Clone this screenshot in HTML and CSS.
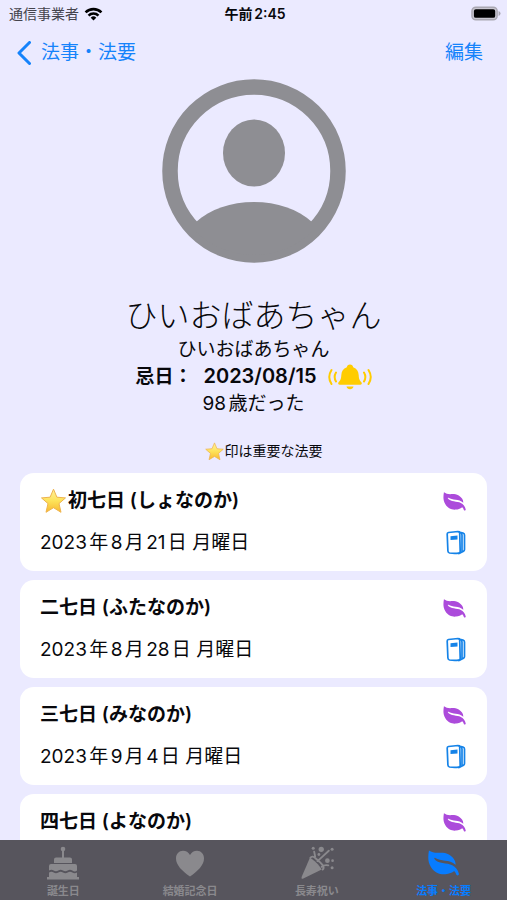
FILE: index.html
```html
<!DOCTYPE html>
<html lang="ja">
<head>
<meta charset="utf-8">
<meta name="viewport" content="width=device-width, initial-scale=1">
<title>法事・法要</title>
<link rel="stylesheet" href="styles.css">
</head>
<body>
<svg class="defs" aria-hidden="true">
  <defs>
    <linearGradient id="gold" x1="0" y1="0" x2="0" y2="1">
      <stop offset="0" stop-color="#fff0a0"/>
      <stop offset="0.5" stop-color="#fde35a"/>
      <stop offset="1" stop-color="#f8b830"/>
    </linearGradient>
    <symbol id="leaf" viewBox="0 0 32 27">
      <path fill="currentColor" d="M1 .5C0 6-.5 12 3 17.500 7 24 13 25.500 18 25c4-.2 7-1.500 9-3.200 1.300 1.200 1.800 2.500 2.300 3.800.7 1.400 3 .7 2.600-1.100C31 20.500 28.500 17.500 25 15.700 20 13 10 14.500 6.500 9c-.2-.7.4-1 1-.7C13 12 22 9.500 28.500 15.300 28.700 11 26 7.500 22 5 16 1.500 10 4 5 2.500 3.500 2 2.500 1.300 1 .5Z"/>
    </symbol>
    <symbol id="book" viewBox="0 0 20 26">
      <g fill="none" stroke="currentColor" stroke-width="1.700" stroke-linejoin="round" stroke-linecap="round">
        <path d="M2.500 2.500 12 1.500q1.500 0 1.700 1.500l.5 18.500q0 1.500-1.500 1.700-4.500.6-9.200-.2Q2 22.700 1.900 21L1.200 4Q1.200 2.700 2.500 2.500Z"/>
        <path d="M13 1.700 15 3q1 .8 1 2v17l-3 1.500M15 2.500l2 .5q1.500.5 1.500 2v14.500q0 1.200-1 1.700L16 22"/>
      </g>
      <path fill="currentColor" d="m4.500 6.200 7-.6v4l-7 .5Z"/>
    </symbol>
    <symbol id="star" viewBox="0 0 26 26">
      <path fill="url(#gold)" stroke="#eeb34d" stroke-width="1" stroke-linejoin="round" d="m13 1.200 3.400 8 8.600.7-6.500 5.700 2 8.700-7.500-4.600-7.500 4.600 2-8.700L1 9.900l8.600-.7Z"/>
    </symbol>
  </defs>
</svg>
<div class="app">
  <header>
    <div class="status">
      <div class="carrier">
        <span>通信事業者</span>
        <svg class="wifi" viewBox="0 0 20 15" aria-hidden="true"><g fill="none" stroke="#000" stroke-width="2.800"><path d="M1.500 5.700a12.200 12.200 0 0 1 17 0"/><path d="M4.700 9.200a7.500 7.500 0 0 1 10.600 0"/></g><path d="m10 14.500-3-3.100a4.300 4.300 0 0 1 6 0Z"/></svg>
      </div>
      <time class="clock">午前2:45</time>
      <svg class="battery" viewBox="0 0 31 15" aria-hidden="true"><rect x="1" y="1" width="26" height="13" rx="4" fill="#c9c7d1" stroke="#aaa8b2" stroke-width="1.500"/><rect x="3" y="3" width="22" height="9" rx="2"/><path fill="#aaa8b2" d="M28.500 5q2 .8 2 2.500t-2 2.500Z"/></svg>
    </div>
    <nav class="nav">
      <a class="back" href="#"><svg viewBox="0 0 14 24" aria-hidden="true"><path d="M12.500 1.500 2 12l10.500 10.500" fill="none" stroke="currentColor" stroke-width="3" stroke-linecap="round" stroke-linejoin="round"/></svg>法事・法要</a>
      <button class="edit" type="button">編集</button>
    </nav>
  </header>
  <main>
    <section class="profile">
      <svg class="avatar" viewBox="0 0 184 184" aria-hidden="true">
        <defs><clipPath id="disc"><circle cx="92" cy="92" r="84"/></clipPath></defs>
        <circle cx="92" cy="92" r="84" fill="none" stroke="#8e8e93" stroke-width="15.500"/>
        <ellipse cx="92" cy="74" rx="31" ry="33.500" fill="#8e8e93"/>
        <path clip-path="url(#disc)" fill="#8e8e93" d="M34 143c14-13 35-20 58-20s44 7 58 20v41H34Z"/>
      </svg>
      <h1>ひいおばあちゃん</h1>
      <p class="line">ひいおばあちゃん</p>
      <p class="line death"><span>忌日：</span><time>2023/08/15</time>
        <svg class="bell" viewBox="0 0 44 26" aria-hidden="true"><g fill="#ffcc00"><path d="M22 .5c1.800 0 3 1.200 3.200 2.700 3.600 1.300 5.300 4.200 5.500 8 .2 4.500 1.300 5.300 2.700 7 .9 1.100.3 2.600-1.200 2.600H11.800c-1.500 0-2.100-1.500-1.200-2.600 1.400-1.700 2.500-2.500 2.700-7 .2-3.800 1.900-6.700 5.500-8C19 1.700 20.200.5 22 .5ZM18.500 22.500h7c-.4 1.800-1.700 2.800-3.500 2.800s-3.100-1-3.500-2.800Z"/></g><g fill="none" stroke="#ffcc00" stroke-width="2" stroke-linecap="round"><path d="M8 8.500q-2.700 4.500 0 9M3.500 6q-4.500 7 0 14M36 8.500q2.700 4.500 0 9M40.500 6q4.500 7 0 14"/></g></svg>
      </p>
      <p class="line">98歳だった</p>
    </section>
    <p class="note"><svg aria-hidden="true"><use href="#star"/></svg>印は重要な法要</p>
    <ul class="list">
      <li class="card">
        <div class="row"><h2><svg class="star" aria-hidden="true"><use href="#star"/></svg>初七日 (しょなのか)</h2><svg class="leaf" aria-hidden="true"><use href="#leaf"/></svg></div>
        <div class="row"><time>2023年8月21日 月曜日</time><svg class="book" aria-hidden="true"><use href="#book"/></svg></div>
      </li>
      <li class="card">
        <div class="row"><h2>二七日 (ふたなのか)</h2><svg class="leaf" aria-hidden="true"><use href="#leaf"/></svg></div>
        <div class="row"><time>2023年8月28日 月曜日</time><svg class="book" aria-hidden="true"><use href="#book"/></svg></div>
      </li>
      <li class="card">
        <div class="row"><h2>三七日 (みなのか)</h2><svg class="leaf" aria-hidden="true"><use href="#leaf"/></svg></div>
        <div class="row"><time>2023年9月4日 月曜日</time><svg class="book" aria-hidden="true"><use href="#book"/></svg></div>
      </li>
      <li class="card">
        <div class="row"><h2>四七日 (よなのか)</h2><svg class="leaf" aria-hidden="true"><use href="#leaf"/></svg></div>
      </li>
    </ul>
  </main>
  <nav class="tabs">
    <a href="#"><svg viewBox="0 0 34 34" aria-hidden="true"><g fill="currentColor"><circle cx="17" cy="3" r="2.300"/><path d="M16 4h2v8h-2ZM10 11.500h14q2 0 2 2V17H8v-3.500q0-2 2-2ZM5 18h24q2 0 2 2v4.500q-2 2-4.700 0-2.300-1.500-4.600 0-2.400 1.500-4.700 0-2.300-1.500-4.700 0-2.300 1.500-4.600 0-2.200-1.500-4.700 0V20q0-2 2-2Z"/><path d="M3 26.500q2.500-1.500 4.700 0 2.300 1.300 4.600 0 2.400-1.500 4.700 0 2.300 1.300 4.700 0 2.300-1.500 4.600 0 2.500 1.300 4.700 0V31H3ZM1 31h32v2.500H1Z"/></g></svg><span>誕生日</span></a>
    <a href="#"><svg viewBox="0 0 34 34" aria-hidden="true"><path fill="currentColor" d="M17 30.500C9 25 3 19 3 12.500 3 8 6 4.800 10 4.800c3 0 5.500 1.500 7 4.200 1.500-2.700 4-4.200 7-4.200 4 0 7 3.200 7 7.700C31 19 25 25 17 30.500Z"/></svg><span>結婚記念日</span></a>
    <a href="#"><svg viewBox="0 0 36 36" aria-hidden="true"><g fill="currentColor"><path d="M10.500 12.500C15 15 20 20 23 25L3.500 34.500q-2.500.8-1.800-1.800Z"/><circle cx="22.500" cy="3.500" r="2.800"/><circle cx="29" cy="15.500" r="2.500"/><circle cx="14" cy="2.500" r="1.600"/><circle cx="34" cy="3.500" r="1.600"/><circle cx="20" cy="9" r="1.500"/><circle cx="34.500" cy="15.500" r="1.400"/><circle cx="34" cy="23" r="1.600"/></g><g fill="none" stroke="currentColor" stroke-width="2" stroke-linecap="round"><path d="M11 12.500q2-3 6 1c6 5 10 9 7 11.500M15 6l1 5M18.500 16l5-4.500 7-6.500M23 22q3-2.500 7-1.500"/></g></svg><span>長寿祝い</span></a>
    <a class="active" href="#" aria-current="page"><svg class="tab-leaf" aria-hidden="true"><use href="#leaf"/></svg><span>法事・法要</span></a>
  </nav>
</div>
</body>
</html>
```

FILE: styles.css
```css
* { box-sizing: border-box; }

body {
  margin: 0;
  background: #ebeaff;
  color: #08080c;
  font-family: Inter, "Noto Sans CJK JP", sans-serif;
  font-size: 19px;
  line-height: 26px;
  text-autospace: normal;
}

h1, h2, p, ul { margin: 0; padding: 0; }
svg { display: block; flex: none; }
a { color: inherit; text-decoration: none; }
.defs { position: absolute; width: 0; height: 0; }

.app {
  display: flex;
  flex-direction: column;
  height: 100vh;
}

.status {
  display: grid;
  grid-template-columns: 1fr auto 1fr;
  align-items: center;
  height: 27px;
  padding: 0 6px 0 9px;
  font-size: 14px;
  line-height: 20px;
}
.carrier { display: flex; align-items: center; gap: 5px; color: #44434c; }
.wifi { width: 19px; height: 14px; }
.clock { font-weight: 600; }
.battery { width: 30px; height: 15px; justify-self: end; }

.nav {
  display: flex;
  align-items: center;
  justify-content: space-between;
  height: 52px;
  padding: 0 24px 0 17px;
  color: #1583fb;
}
.back { display: flex; align-items: center; gap: 10px; }
.back svg { width: 14px; height: 24px; }
.edit {
  padding: 0;
  border: 0;
  background: none;
  color: inherit;
  font: inherit;
}

main { flex: 1; min-height: 0; overflow: hidden; }

.profile {
  display: flex;
  flex-direction: column;
  align-items: center;
}
.avatar { width: 184px; height: 184px; }
h1 {
  margin-top: 33px;
  font-size: 32px;
  font-weight: 300;
  line-height: 40px;
}
.line { line-height: 27px; }
.death { display: flex; align-items: center; gap: 11px; font-weight: 600; }
.death time { font-size: 20px; }
.bell { width: 44px; height: 26px; }

.note {
  display: flex;
  align-items: center;
  justify-content: center;
  gap: 1px;
  margin: 22px 0 10px 20px;
  font-size: 14px;
  line-height: 24px;
}
.note svg { width: 19px; height: 19px; }

.list {
  display: flex;
  flex-direction: column;
  gap: 9px;
  padding: 0 20px;
  list-style: none;
}
.card {
  display: flex;
  flex-direction: column;
  gap: 16px;
  min-height: 98px;
  padding: 15px 20px;
  border-radius: 14px;
  background: #fff;
}
.row { display: flex; align-items: center; justify-content: space-between; height: 26px; }
h2 { display: flex; align-items: center; font-size: 19px; font-weight: 600; }
.star { width: 27px; height: 26px; margin-right: 1px; }
.leaf { width: 23px; height: 19px; margin-right: 1px; color: #ac4bdb; }
.book { width: 20px; height: 26px; margin-right: 1px; color: #1583e8; }

.tabs {
  display: grid;
  grid-template-columns: repeat(4, 1fr);
  height: 60px;
  background: #57555d;
  color: #8a898d;
  font-size: 11px;
  font-weight: 700;
  line-height: 16px;
}
.tabs a {
  display: flex;
  flex-direction: column;
  align-items: center;
  justify-content: space-between;
  padding: 6px 0 1px;
}
.tabs svg { width: 34px; height: 34px; }
.tabs .tab-leaf { width: 31px; }
.tabs .active { color: #087cff; }
```
